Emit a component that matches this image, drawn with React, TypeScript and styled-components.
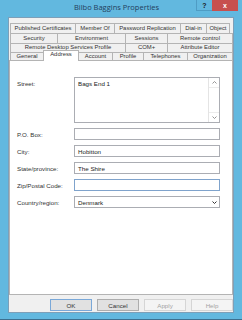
import styled, { createGlobalStyle } from "styled-components";

const GlobalStyle = createGlobalStyle`
  html, body {
    margin: 0;
    padding: 0;
    background: #62b8df;
  }
  body {
    font-family: "Liberation Sans", Arial, sans-serif;
  }
`;

const tabRows: { height: number; tabs: { label: string; width: number; active?: boolean }[] }[] = [
  {
    height: 10,
    tabs: [
      { label: "Published Certificates", width: 66 },
      { label: "Member Of", width: 40 },
      { label: "Password Replication", width: 67 },
      { label: "Dial-in", width: 27 },
      { label: "Object", width: 24 },
    ],
  },
  {
    height: 10,
    tabs: [
      { label: "Security", width: 48 },
      { label: "Environment", width: 69 },
      { label: "Sessions", width: 43 },
      { label: "Remote control", width: 66 },
    ],
  },
  {
    height: 9,
    tabs: [
      { label: "Remote Desktop Services Profile", width: 116 },
      { label: "COM+", width: 43 },
      { label: "Attribute Editor", width: 66 },
    ],
  },
  {
    height: 8,
    tabs: [
      { label: "General", width: 34 },
      { label: "Address", width: 36, active: true },
      { label: "Account", width: 35 },
      { label: "Profile", width: 32 },
      { label: "Telephones", width: 45 },
      { label: "Organization", width: 46 },
    ],
  },
];

export default function App() {
  return (
    <>
      <GlobalStyle />
      <Window>
        <TitleBar>
          <Title>Bilbo Baggins Properties</Title>
          <Controls>
            <HelpButton>?</HelpButton>
            <CloseButton>x</CloseButton>
          </Controls>
        </TitleBar>
        <Body>
          <TabStrip>
            {tabRows.map((row, i) => (
              <TabRow key={i} $height={row.height}>
                {row.tabs.map((t) => (
                  <Tab key={t.label} $width={t.width} $active={t.active}>
                    {t.label}
                  </Tab>
                ))}
              </TabRow>
            ))}
          </TabStrip>
          <Panel>
            <Form>
              <Label $top>Street:</Label>
              <TextArea>
                <FieldText>Bags End 1</FieldText>
                <ScrollBar>
                  <ScrollArrow>
                    <svg width="5" height="3" viewBox="0 0 5 3">
                      <path d="M0.5 2.5 L2.5 0.5 L4.5 2.5" fill="none" stroke="#8a8a8a" strokeWidth="0.9" />
                    </svg>
                  </ScrollArrow>
                  <ScrollTrack />
                  <ScrollArrow>
                    <svg width="5" height="3" viewBox="0 0 5 3">
                      <path d="M0.5 0.5 L2.5 2.5 L4.5 0.5" fill="none" stroke="#8a8a8a" strokeWidth="0.9" />
                    </svg>
                  </ScrollArrow>
                </ScrollBar>
              </TextArea>

              <Label>P.O. Box:</Label>
              <Input />

              <Label>City:</Label>
              <Input>
                <FieldText>Hobitton</FieldText>
              </Input>

              <Label>State/province:</Label>
              <Input>
                <FieldText>The Shire</FieldText>
              </Input>

              <Label>Zip/Postal Code:</Label>
              <Input $focused />

              <Label>Country/region:</Label>
              <Input>
                <FieldText>Denmark</FieldText>
                <Chevron>
                  <svg width="5" height="3" viewBox="0 0 5 3">
                    <path d="M0.5 0.5 L2.5 2.5 L4.5 0.5" fill="none" stroke="#333" strokeWidth="1" />
                  </svg>
                </Chevron>
              </Input>
            </Form>
          </Panel>
          <ButtonRow>
            <Button $primary>OK</Button>
            <Button>Cancel</Button>
            <Button $disabled>Apply</Button>
            <Button $disabled>Help</Button>
          </ButtonRow>
        </Body>
      </Window>
    </>
  );
}

const Window = styled.div`
  width: 242px;
  height: 320px;
  box-sizing: border-box;
  display: flex;
  flex-direction: column;
  background: #62b8df;
  border-bottom: 1px solid #3d6f8f;
`;

const TitleBar = styled.div`
  height: 17px;
  display: grid;
  grid-template-columns: 1fr auto 1fr;
  align-items: start;
`;

const Title = styled.div`
  grid-column: 2;
  padding-right: 9px;
  font-family: "Open Sans", "Liberation Sans", sans-serif;
  font-size: 7.5px;
  line-height: 15px;
  color: #23405d;
  white-space: nowrap;
`;

const Controls = styled.div`
  grid-column: 3;
  justify-self: end;
  display: flex;
  margin-right: 4px;
`;

const HelpButton = styled.div`
  width: 16px;
  height: 11px;
  box-sizing: border-box;
  border-left: 1px solid #4f9cc4;
  border-bottom: 1px solid #4f9cc4;
  display: flex;
  align-items: center;
  justify-content: center;
  font-size: 7px;
  font-weight: bold;
  color: #1a1a1a;
`;

const CloseButton = styled.div`
  width: 26px;
  height: 11px;
  background: #c7504f;
  display: flex;
  align-items: center;
  justify-content: center;
  font-size: 7px;
  font-weight: bold;
  color: #fff;
  line-height: 1;
`;

const Body = styled.div`
  flex: 1;
  margin: 0 8px 6px;
  background: #f0f0f0;
  border: 1px solid #7d9fb8;
  padding: 5px 0 1px;
  display: flex;
  flex-direction: column;
`;

const TabStrip = styled.div`
  display: flex;
  flex-direction: column;
  margin-left: 1px;
`;

const TabRow = styled.div<{ $height: number }>`
  display: flex;
  height: ${(p) => p.$height}px;
`;

const Tab = styled.div<{ $width: number; $active?: boolean }>`
  width: ${(p) => p.$width}px;
  box-sizing: border-box;
  border: 1px solid #b4b4b4;
  border-bottom: none;
  background: ${(p) => (p.$active ? "#fff" : "#f0f0f0")};
  font-size: 5.9px;
  color: #333;
  white-space: nowrap;
  overflow: hidden;
  display: flex;
  align-items: center;
  justify-content: center;
  line-height: 1;

  & + & {
    margin-left: -1px;
  }

  ${(p) =>
    p.$active &&
    `
    position: relative;
    z-index: 1;
    height: 11px;
    margin-top: -2px;
    margin-bottom: -1px;
    align-items: flex-start;
    padding-top: 1px;
  `}
`;

const Panel = styled.div`
  flex: 1;
  background: #fff;
  border: 1px solid #b4b4b4;
  padding: 16px 0 0 7px;
`;

const Form = styled.div`
  display: grid;
  grid-template-columns: 57px 146px;
  grid-template-rows: 46px repeat(5, 12px);
  row-gap: 5px;
`;

const Label = styled.div<{ $top?: boolean }>`
  font-size: 6.2px;
  color: #333;
  white-space: nowrap;
  display: flex;
  align-items: ${(p) => (p.$top ? "flex-start" : "center")};
  padding-top: ${(p) => (p.$top ? "3px" : "0")};
`;

const FieldText = styled.span`
  flex: 1;
  font-size: 6.2px;
  color: #222;
  white-space: nowrap;
  padding-left: 3px;
`;

const Input = styled.div<{ $focused?: boolean }>`
  height: 12px;
  box-sizing: border-box;
  border: 1px solid ${(p) => (p.$focused ? "#7fa3cc" : "#abadb3")};
  background: #fff;
  display: flex;
  align-items: center;
`;

const TextArea = styled.div`
  height: 46px;
  box-sizing: border-box;
  border: 1px solid #abadb3;
  background: #fff;
  display: flex;
  align-items: flex-start;
  ${FieldText} {
    padding-top: 2px;
  }
`;

const ScrollBar = styled.div`
  width: 10px;
  height: 100%;
  border-left: 1px solid #e4e4e4;
  display: flex;
  flex-direction: column;
`;

const ScrollArrow = styled.div`
  height: 9px;
  display: flex;
  align-items: center;
  justify-content: center;
  background: #fff;
`;

const ScrollTrack = styled.div`
  flex: 1;
  background: #fff;
  border-top: 1px solid #ececec;
  border-bottom: 1px solid #ececec;
`;

const Chevron = styled.div`
  width: 9px;
  display: flex;
  justify-content: center;
  align-items: center;
`;

const ButtonRow = styled.div`
  display: flex;
  justify-content: flex-end;
  gap: 5px;
  margin-top: 4px;
`;

const Button = styled.div<{ $primary?: boolean; $disabled?: boolean }>`
  width: 42px;
  height: 12px;
  box-sizing: border-box;
  display: flex;
  align-items: center;
  justify-content: center;
  font-size: 6.2px;
  background: ${(p) => (p.$disabled ? "#f4f4f4" : "#e1e1e1")};
  border: 1px solid
    ${(p) => (p.$primary ? "#7aa8d8" : p.$disabled ? "#d5d5d5" : "#adadad")};
  color: ${(p) => (p.$disabled ? "#a3a3a3" : "#333")};
`;
